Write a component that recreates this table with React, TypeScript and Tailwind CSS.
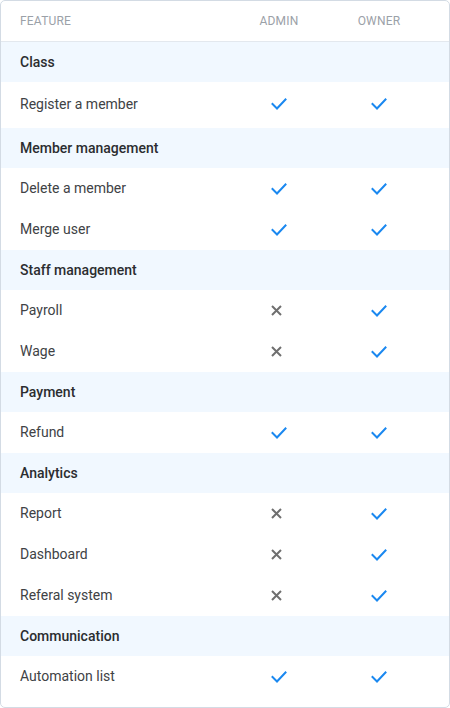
const sections = [
  { title: "Class", rows: [{ name: "Register a member", admin: true, owner: true, tall: true }] },
  {
    title: "Member management",
    rows: [
      { name: "Delete a member", admin: true, owner: true },
      { name: "Merge user", admin: true, owner: true },
    ],
  },
  {
    title: "Staff management",
    rows: [
      { name: "Payroll", admin: false, owner: true },
      { name: "Wage", admin: false, owner: true },
    ],
  },
  { title: "Payment", rows: [{ name: "Refund", admin: true, owner: true }] },
  {
    title: "Analytics",
    rows: [
      { name: "Report", admin: false, owner: true },
      { name: "Dashboard", admin: false, owner: true },
      { name: "Referal system", admin: false, owner: true },
    ],
  },
  { title: "Communication", rows: [{ name: "Automation list", admin: true, owner: true }] },
];

const CheckMark = () => (
  <svg width="16" height="12" viewBox="0 0 16 12" fill="none">
    <path d="M1.5 6 6 10.5 14.5 1.5" stroke="#1a88f0" strokeWidth="2" strokeLinecap="square" />
  </svg>
);

const Cross = () => (
  <svg width="11" height="11" viewBox="0 0 11 11" fill="none" className="mr-[6px]">
    <path d="M1 1 10 10M10 1 1 10" stroke="#6f6f6f" strokeWidth="2" />
  </svg>
);

const Mark = ({ ok }: { ok: boolean }) => (
  <div className="flex items-center justify-center">{ok ? <CheckMark /> : <Cross />}</div>
);

export default function App() {
  return (
    <div className="w-[450px] h-[708px] bg-white font-['Roboto','Liberation_Sans',sans-serif]">
      <div className="h-full border border-[#d3dbe4] rounded-[5px] overflow-hidden">
        <div className="grid grid-cols-[1fr_100px_100px] pl-[19px] pr-5 h-[41px] items-center border-b border-[#e3e8ee] text-[12px] text-[#9ba1a8] tracking-[0.2px]">
          <div>FEATURE</div>
          <div className="text-center">ADMIN</div>
          <div className="text-center">OWNER</div>
        </div>
        {sections.map((s) => (
          <div key={s.title}>
            <div className="h-[40px] flex items-center pl-[19px] pr-5 bg-[#f1f8ff] text-[14px] font-medium text-[#2b2d30]">
              {s.title}
            </div>
            {s.rows.map((r) => (
              <div
                key={r.name}
                className={`grid grid-cols-[1fr_100px_100px] pl-[19px] pr-5 items-center text-[14px] text-[#404245] ${
                  "tall" in r && r.tall ? "h-[46px] pb-[2px]" : "h-[41px]"
                }`}
              >
                <div>{r.name}</div>
                <Mark ok={r.admin} />
                <Mark ok={r.owner} />
              </div>
            ))}
          </div>
        ))}
      </div>
    </div>
  );
}
